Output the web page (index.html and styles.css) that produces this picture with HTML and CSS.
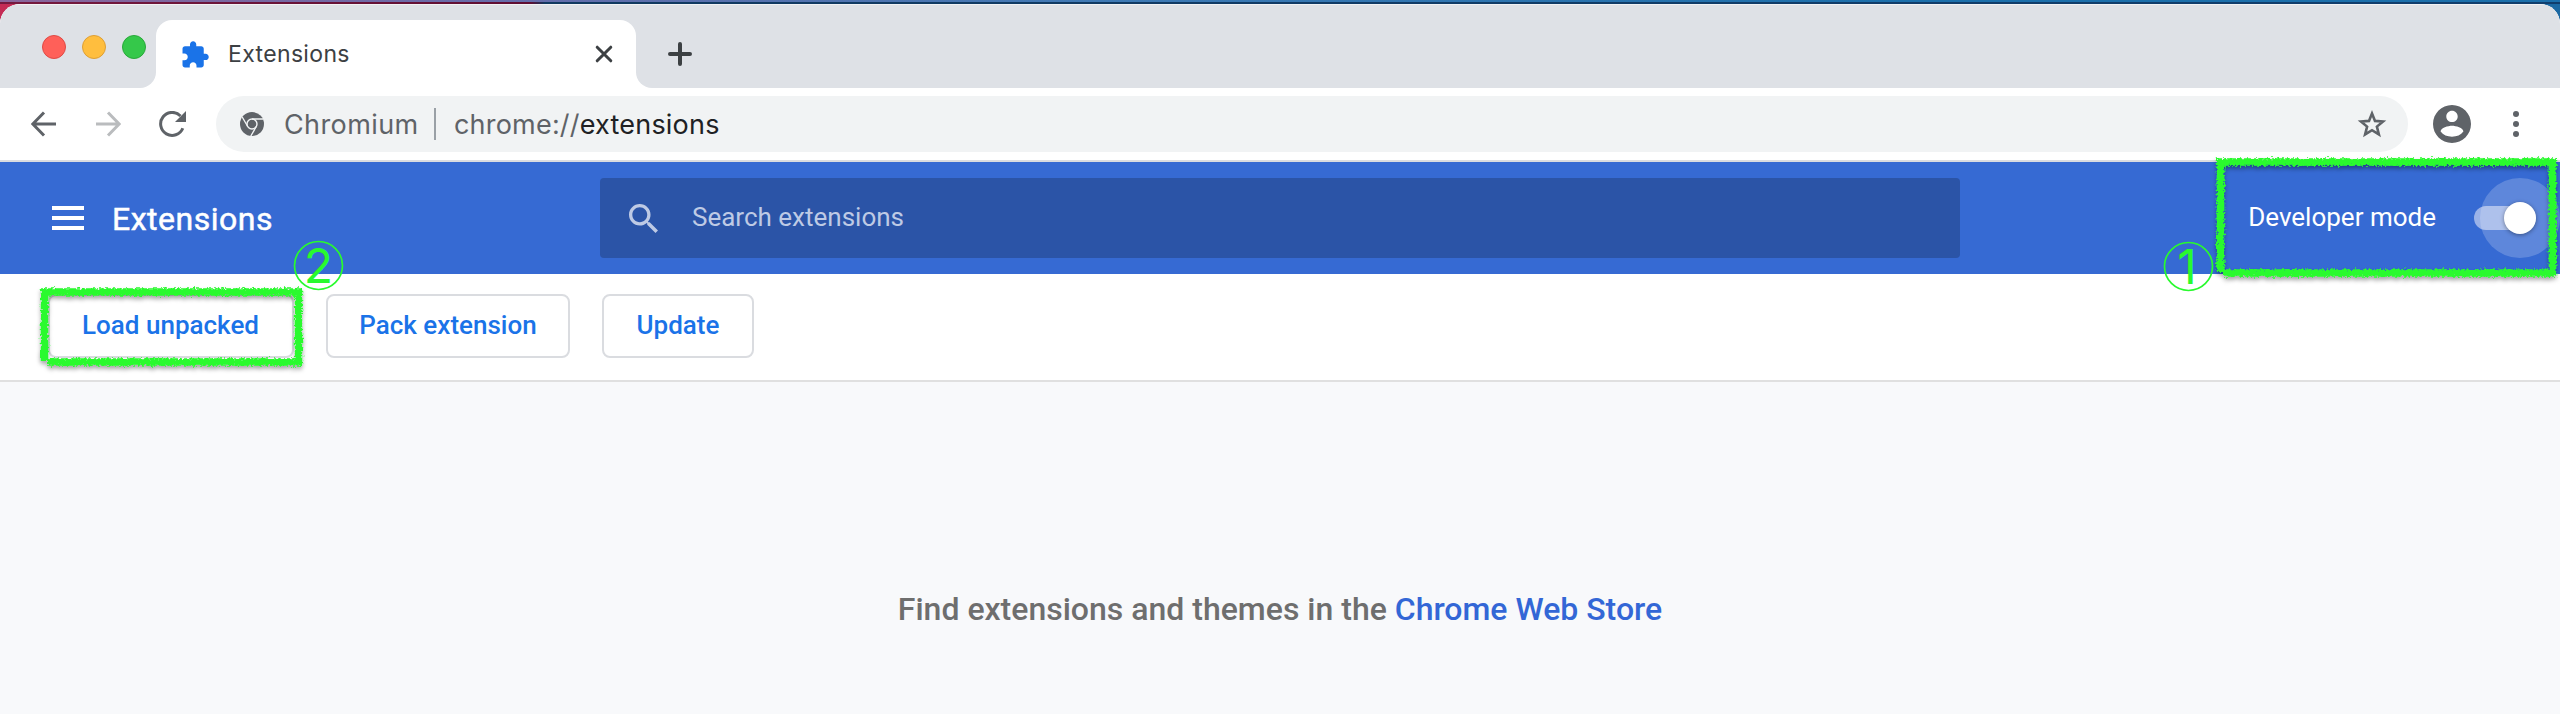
FILE: index.html
```html
<!DOCTYPE html>
<html lang="en">
<head>
<meta charset="utf-8">
<title>Extensions</title>
<link rel="stylesheet" href="styles.css">
</head>
<body>
<div class="desktop"></div>
<div class="window">
  <div class="tabstrip">
    <div class="strip-left">
      <span class="light red"></span><span class="light yellow"></span><span class="light green"></span>
    </div>
    <div class="tab">
      <svg class="puzzle" viewBox="0 0 24 24" width="30" height="30"><path fill="#1a73e8" d="M20.500 11H19V7c0-1.100-.9-2-2-2h-4V3.500C13 2.120 11.880 1 10.500 1S8 2.120 8 3.500V5H4c-1.100 0-1.990.9-1.990 2v3.800H3.500c1.490 0 2.700 1.210 2.700 2.700s-1.210 2.700-2.700 2.700H2V20c0 1.100.9 2 2 2h3.800v-1.500c0-1.490 1.210-2.700 2.700-2.700 1.490 0 2.700 1.210 2.700 2.700V22H17c1.100 0 2-.9 2-2v-4h1.500c1.380 0 2.500-1.120 2.500-2.500S21.880 11 20.500 11z"/></svg>
      <span class="tab-title">Extensions</span>
      <svg class="close" viewBox="0 0 18 18" width="18" height="18"><path d="M2.200 2.200l13.600 13.600M15.800 2.200L2.200 15.800" stroke="#3c4043" stroke-width="3" stroke-linecap="round"/></svg>
    </div>
    <div class="strip-right">
      <svg viewBox="0 0 24 24" width="24" height="24"><path d="M12 2v20M2 12h20" stroke="#3c4043" stroke-width="4" stroke-linecap="round"/></svg>
    </div>
  </div>
  <div class="toolbar">
    <svg class="nav" viewBox="0 0 26 26" width="26" height="26"><path d="M25 13H2M13 1.500L1.800 13 13 24.500" fill="none" stroke="#5f6368" stroke-width="3"/></svg>
    <svg class="nav fwd" viewBox="0 0 26 26" width="26" height="26"><path d="M1 13h23M13 1.500L24.200 13 13 24.500" fill="none" stroke="#babcbe" stroke-width="3"/></svg>
    <svg class="nav reload" viewBox="0 0 28 26" width="28" height="26"><path d="M23.800 17.200A11.500 11.500 0 1 1 21.500 5" fill="none" stroke="#5f6368" stroke-width="3"/><path d="M27 0v11H16z" fill="#5f6368"/></svg>
    <div class="omnibox">
      <svg viewBox="0 0 24 24" width="24" height="24"><circle cx="12" cy="12" r="12" fill="#5f6368"/><g fill="none" stroke="#f1f3f4" stroke-width="1.400"><circle cx="12" cy="12" r="5"/><path d="M12 7h11M7.700 14.500L2.200 5M16.300 14.500L10.800 24"/></g></svg>
      <span class="site">Chromium</span><span class="divider"></span><span class="url">chrome://<b>extensions</b></span>
      <svg class="star" viewBox="0 0 30 30" width="30" height="30"><path fill="none" stroke="#5f6368" stroke-width="2.600" d="M15 4.500l3 7.400 8 .6-6.100 5.100 2 7.800L15 21.200l-6.900 4.200 2-7.800L4 12.500l8-.6z"/></svg>
    </div>
    <svg class="profile" viewBox="2 2 20 20" width="38" height="38"><path fill="#5f6368" d="M12 2C6.480 2 2 6.480 2 12s4.480 10 10 10 10-4.480 10-10S17.520 2 12 2zm0 3c1.660 0 3 1.340 3 3s-1.340 3-3 3-3-1.340-3-3 1.340-3 3-3zm0 13.700c-2.500 0-4.710-.9-6-2.720.03-1.990 4-3.080 6-3.080 1.990 0 5.970 1.090 6 3.080-1.290 1.820-3.500 2.720-6 2.720z"/></svg>
    <svg class="kebab" viewBox="0 0 6 26" width="6" height="26"><g fill="#5f6368"><circle cx="3" cy="3" r="3"/><circle cx="3" cy="13" r="3"/><circle cx="3" cy="23" r="3"/></g></svg>
  </div>
  <header class="header">
    <div class="menu"><i></i><i></i><i></i></div>
    <h1>Extensions</h1>
    <div class="search">
      <svg viewBox="3 3 17.500 17.500" width="29" height="29"><path fill="#becae5" d="M15.500 14h-.79l-.28-.27C15.410 12.590 16 11.110 16 9.500 16 5.910 13.090 3 9.500 3S3 5.910 3 9.500 5.910 16 9.500 16c1.610 0 3.090-.59 4.230-1.570l.27.280v.79l5 4.990L20.490 19l-4.990-5zm-6 0C7.010 14 5 11.990 5 9.500S7.010 5 9.500 5 14 7.010 14 9.500 11.990 14 9.500 14z"/></svg>
      <span>Search extensions</span>
    </div>
    <div class="devmode"><span>Developer mode</span><div class="toggle"><div class="ripple"></div><div class="knob"></div></div></div>
  </header>
  <div class="actions">
    <button class="load">Load unpacked</button><button class="pack">Pack extension</button><button class="update">Update</button>
  </div>
  <main class="content"><p>Find extensions and themes in the <a>Chrome Web Store</a></p></main>
</div>
<svg class="marks" viewBox="0 0 2560 714" width="2560" height="714">
  <defs>
    <filter id="chalk" filterUnits="userSpaceOnUse" x="0" y="130" width="2560" height="260">
      <feTurbulence type="fractalNoise" baseFrequency="0.45" numOctaves="2" seed="4" result="n"/>
      <feDisplacementMap in="SourceGraphic" in2="n" scale="6" xChannelSelector="R" yChannelSelector="G" result="d"/>
      <feDropShadow in="d" dx="0" dy="3" stdDeviation="2" flood-color="#000" flood-opacity=".35"/>
    </filter>
  </defs>
  <g filter="url(#chalk)" fill="none" stroke="#29fa2e" stroke-width="7.500">
    <path d="M44.500 361V292H298.500V362H48"/>
    <path d="M2220.500 272V162H2552.500V273H2223"/>
  </g>
  <g fill="none" stroke="#29fa2e" stroke-width="1.700"><circle cx="318.500" cy="265.500" r="24"/><circle cx="2188.500" cy="266.500" r="24"/></g>
  <g class="digits" fill="#29fa2e" text-anchor="middle"><text x="318.500" y="282.800">2</text><text x="2187" y="283.800">1</text></g>
</svg>
</body>
</html>
```
FILE: styles.css
```css
* { box-sizing: border-box; }
body { margin: 0; width: 2560px; height: 714px; overflow: hidden; font-family: Roboto, "Liberation Sans", sans-serif; background: linear-gradient(90deg, #c42b55 0, #a01640 530px, #1b5f8c 545px, #1b68a2 100%); }
.desktop { height: 4px; border-bottom: 2px solid rgba(0,0,30,.4); background: linear-gradient(90deg, #8a659b 0, #666caa 500px, #3f7ab5 1100px, #1b6fab 1900px); background-clip: padding-box; }
.window { height: 710px; border-radius: 20px 20px 0 0; overflow: hidden; background: #fff; display: flex; flex-direction: column; }
.tabstrip { height: 84px; display: flex; background: linear-gradient(#dee1e6 16px, #fff 16px); }
.strip-left, .strip-right { height: 84px; background: #dee1e6; border-top: 1px solid #f1f2f4; }
.strip-left { width: 156px; border-radius: 0 0 16px 0; padding: 30px 0 0 42px; display: flex; gap: 16px; }
.light { width: 24px; height: 24px; border-radius: 50%; border: 1px solid; }
.red { background: #ff6059; border-color: #df4a45; }
.yellow { background: #ffbe3e; border-color: #de9f35; }
.green { background: #35c84a; border-color: #29a83a; }
.tab { width: 480px; height: 84px; display: flex; align-items: flex-start; background: linear-gradient(#f1f2f4 1px, #dee1e6 1px, #dee1e6 32px, #fff 32px); position: relative; }
.tab::before { content: ""; position: absolute; inset: 16px 0 0; background: #fff; border-radius: 16px 16px 0 0; }
.tab > * { position: relative; }
.puzzle { margin: 36px 0 0 24px; }
.tab-title { margin: 35px 0 0 18px; font: 23px/30px Inter, Roboto, sans-serif; letter-spacing: .35px; color: #3c4043; }
.close { margin: 41px 23px 0 auto; }
.strip-right { flex: 1; border-radius: 0 0 0 16px; padding: 37px 0 0 32px; }
.toolbar { height: 74px; border-bottom: 2px solid #dadce0; display: flex; align-items: center; padding: 0 41px 0 31px; background: #fff; }
.nav { flex: none; margin-right: 38px; }
.reload { margin-right: 29px; }
.omnibox { flex: 1; height: 56px; border-radius: 28px; background: #f1f3f4; display: flex; align-items: center; padding: 0 21px 0 24px; font: 27px Inter, Roboto, sans-serif; color: #5f6368; }
.site { margin-left: 20px; width: 135px; letter-spacing: .4px; }
.divider { width: 2px; height: 32px; background: #9aa0a6; margin: 0 18px 0 15px; }
.url { letter-spacing: .2px; }
.url b { font-weight: 400; color: #202124; }
.star { margin-left: auto; }
.profile { margin: 0 42px 0 25px; }
.header { height: 112px; background: #366ad3; display: flex; align-items: center; color: #fff; position: relative; }
.menu { width: 32px; height: 24px; margin-left: 52px; display: flex; flex-direction: column; justify-content: space-between; }
.menu i { height: 4px; background: #fff; }
h1 { margin: 1px 0 0 28px; width: 488px; font-size: 32px; font-weight: 400; letter-spacing: .5px; -webkit-text-stroke: .5px #fff; }
.search { width: 1360px; height: 80px; border-radius: 4px; background: #2b54a7; display: flex; align-items: center; padding-left: 29px; font-size: 26px; color: #becae5; }
.search span { margin: -2px 0 0 34px; }
.devmode { margin-left: auto; padding-right: 24px; display: flex; align-items: center; font-size: 26px; }
.devmode span { margin-top: -2px; }
.toggle { width: 62px; height: 24px; margin-left: 38px; border-radius: 12px; background: #9ab2e8; position: relative; }
.ripple { position: absolute; width: 80px; height: 80px; left: 6px; top: -28px; border-radius: 50%; background: rgba(255,255,255,.2); }
.knob { position: absolute; width: 32px; height: 32px; right: 0; top: -4px; border-radius: 50%; background: #fff; box-shadow: 0 1px 4px rgba(0,0,0,.4); }
.actions { height: 108px; display: flex; align-items: flex-start; padding: 20px 48px; border-bottom: 2px solid #e0e0e0; background: #fff; gap: 32px; }
button { height: 64px; border: 2px solid #dadce0; border-radius: 8px; background: #fff; color: #1a73e8; font: 500 26px Roboto, sans-serif; padding: 0 0 3px; }
.load { width: 246px; padding-right: 1px; } .pack { width: 244px; } .update { width: 152px; }
.content { flex: 1; background: #f8f9fb; display: flex; justify-content: center; }
.content p { margin: 208px 0 0; font-size: 32px; line-height: 38px; font-weight: 500; color: #6e6e6e; }
.content a { color: #3367d6; }
.marks { position: absolute; left: 0; top: 0; }
.digits { font: 400 48px Inter, "Liberation Sans", sans-serif; }
```
